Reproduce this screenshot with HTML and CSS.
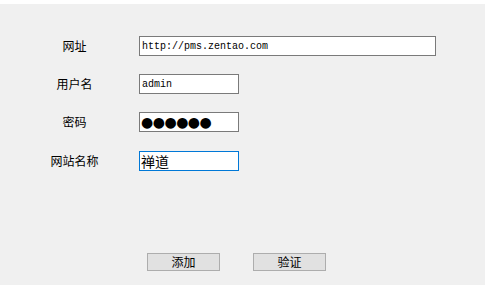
FILE: index.html
```html
<!DOCTYPE html>
<html>
<head>
    <title>添加站点</title>
    <link rel="stylesheet" href="styles.css">
</head>
<body>
    <div class="panel">
        <form class="form">
            <div class="row">
                <label for="url">网址</label>
                <input type="text" id="url" class="field wide" value="http://pms.zentao.com">
            </div>
            <div class="row">
                <label for="user">用户名</label>
                <input type="text" id="user" class="field" value="admin">
            </div>
            <div class="row">
                <label for="pass">密码</label>
                <input type="text" id="pass" class="field dots" value="●●●●●●">
            </div>
            <div class="row last">
                <label for="name">网站名称</label>
                <input type="text" id="name" class="field cn active" value="禅道">
            </div>
        </form>
        <div class="button-group">
            <button type="button">添加</button>
            <button type="button">验证</button>
        </div>
    </div>
</body>
</html>
```

FILE: styles.css
```css
html, body {
    margin: 0;
    padding: 0;
    background-color: #fff;
    height: 100%;
}
body {
    font-family: "Noto Sans CJK SC", "Liberation Sans", sans-serif;
    font-size: 12px;
    color: #000;
}
.panel {
    margin-top: 4px;
    width: 485px;
    height: 281px;
    background-color: #f0f0f0;
    display: flex;
    flex-direction: column;
}
.form {
    margin: 0;
    padding-top: 32px;
    display: flex;
    flex-direction: column;
    gap: 18px;
}
.row {
    display: flex;
    align-items: center;
    height: 20px;
}
.row.last {
    margin-top: 1px;
}
.row label {
    width: 129px;
    padding-left: 10px;
    text-align: center;
    line-height: 20px;
}
.field {
    box-sizing: border-box;
    width: 100px;
    height: 20px;
    margin: 0;
    padding: 0 2px;
    border: 1px solid #7a7a7a;
    background-color: #fff;
    outline: none;
    font-family: "Liberation Mono", monospace;
    font-size: 10px;
    color: #000;
}
.field.wide {
    width: 297px;
}
.field.dots {
    font-family: "DejaVu Sans", sans-serif;
    font-size: 14px;
    letter-spacing: -0.5px;
    padding-left: 1px;
}
.field.cn {
    font-family: "Noto Sans CJK SC", sans-serif;
    font-size: 14px;
    padding-left: 1px;
    padding-bottom: 1px;
}
.field.active {
    border-color: #0078d7;
}
.button-group {
    margin-top: 82px;
    padding-left: 147px;
    display: flex;
    gap: 33px;
}
.button-group button {
    box-sizing: border-box;
    width: 73px;
    height: 18px;
    padding: 0;
    border: 1px solid #adadad;
    background-color: #e1e1e1;
    font-family: "Noto Sans CJK SC", sans-serif;
    font-size: 12px;
    line-height: 14px;
    color: #000;
}
```
